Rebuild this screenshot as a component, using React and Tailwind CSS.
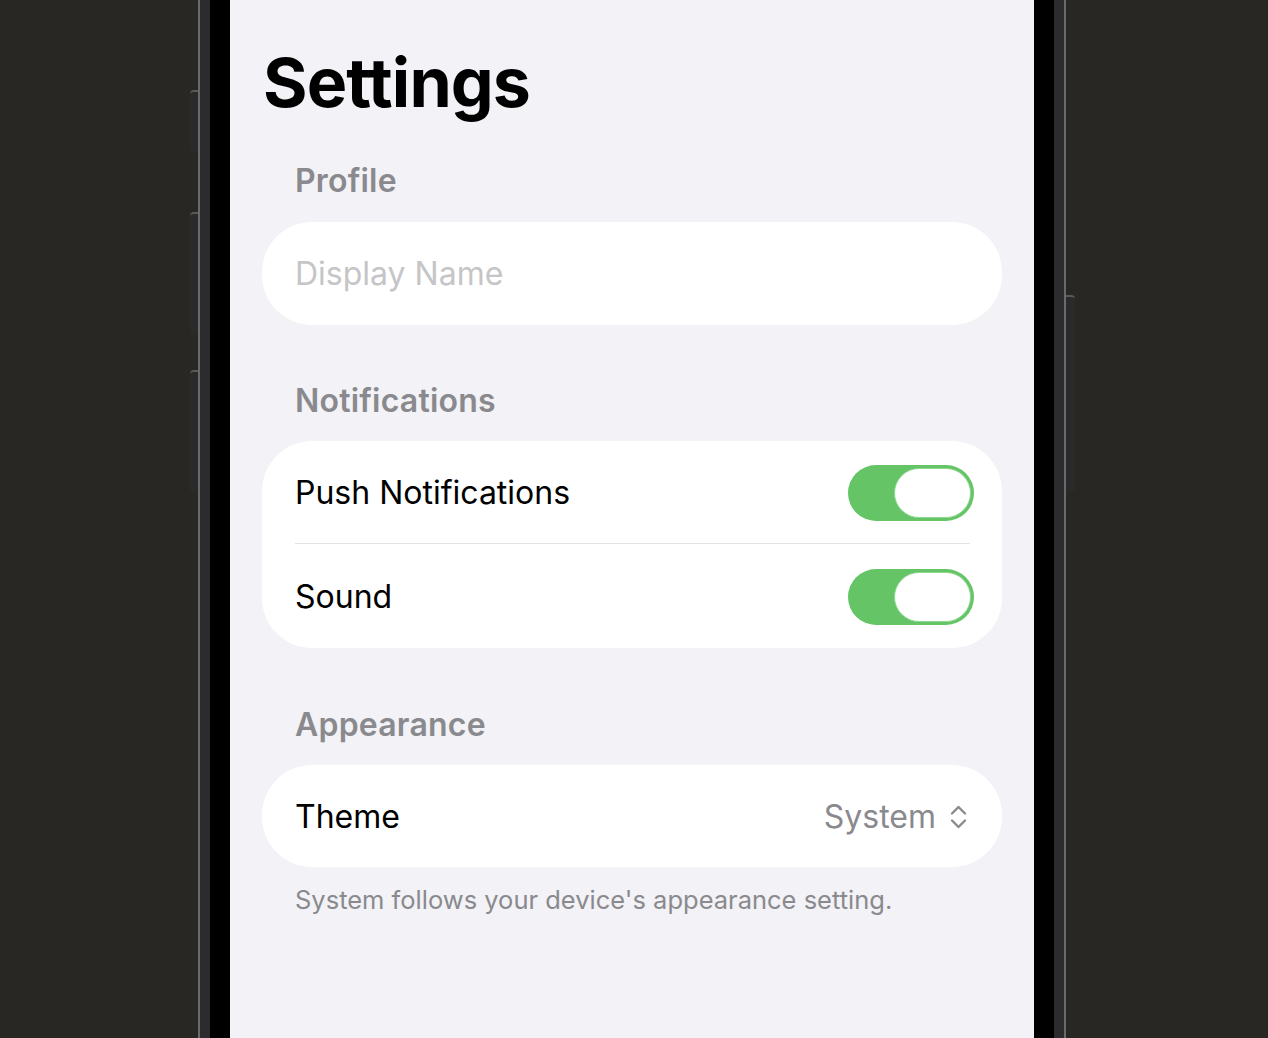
import { useState } from 'react';

const font = { fontFamily: 'Inter, "Noto Sans", sans-serif' };

function Toggle({ on, onChange }) {
  return (
    <button
      onClick={onChange}
      className={`flex h-[56px] w-[126px] items-center rounded-full p-[3px] ${on ? 'justify-end bg-[#65c466]' : 'justify-start bg-[#e9e9eb]'}`}
    >
      <span className="block h-[50px] w-[77px] rounded-full border border-[#8fd88f] bg-white" />
    </button>
  );
}

function UpDown() {
  return (
    <svg width="17" height="26" viewBox="0 0 17 26" fill="none" stroke="#8a8a8e" strokeWidth="2.4" strokeLinecap="round" strokeLinejoin="round">
      <path d="M2 9.5 8.5 3l6.5 6.5" />
      <path d="M2 16.5 8.5 23l6.5-6.5" />
    </svg>
  );
}

function SectionHeader({ children }) {
  return <h2 className="px-[33px] text-[32px] font-semibold leading-[36px] tracking-[0.2px] text-[#8a8a8e]">{children}</h2>;
}

export default function App() {
  const [name, setName] = useState('');
  const [push, setPush] = useState(true);
  const [sound, setSound] = useState(true);

  return (
    <div className="flex h-[1038px] overflow-hidden bg-[#282723] pl-[198px]" style={font}>
      <div className="relative flex h-full w-[868px] border-x-2 border-[#6a6a6a] bg-[#2c2c2e] px-[10px]">
        {/* side buttons */}
        <div className="absolute left-[-10px] top-[90px] h-[63px] w-[8px] rounded-l-sm border-t-2 border-[#5a5a5a] bg-[#2a2a2a]" />
        <div className="absolute left-[-10px] top-[212px] h-[123px] w-[8px] rounded-l-sm border-t-2 border-[#5a5a5a] bg-[#2a2a2a]" />
        <div className="absolute left-[-10px] top-[370px] h-[123px] w-[8px] rounded-l-sm border-t-2 border-[#5a5a5a] bg-[#2a2a2a]" />
        <div className="absolute right-[-11px] top-[295px] h-[197px] w-[9px] rounded-r-sm border-t-2 border-[#5a5a5a] bg-[#2a2a2a]" />

        <div className="flex w-full bg-black px-[20px]">
          <div className="w-[804px] bg-[#f2f2f7] px-[32px] pt-[42px]">
            <h1 className="px-[1px] text-[68px] font-bold leading-[80px] tracking-[-0.9px] text-black">Settings</h1>

            <div className="mt-[41px]">
              <SectionHeader>Profile</SectionHeader>
              <div className="mt-[23px] flex h-[103px] items-center rounded-[50px] bg-white px-[33px]">
                <input
                  value={name}
                  onChange={e => setName(e.target.value)}
                  placeholder="Display Name"
                  className="w-full bg-transparent text-[32px] leading-[40px] text-black outline-none placeholder:text-[#c5c5c7]"
                />
              </div>
            </div>

            <div className="mt-[58px]">
              <SectionHeader>Notifications</SectionHeader>
              <div className="mt-[22px] rounded-[50px] bg-white pl-[33px] pr-[28px]">
                <div className="flex h-[102px] items-center justify-between pt-[2px]">
                  <span className="text-[32px] leading-[40px] text-black">Push Notifications</span>
                  <Toggle on={push} onChange={() => setPush(!push)} />
                </div>
                <div className="mr-[4px] h-px bg-[#e2e2e6]" />
                <div className="flex h-[104px] items-center justify-between pt-[2px]">
                  <span className="text-[32px] leading-[40px] text-black">Sound</span>
                  <Toggle on={sound} onChange={() => setSound(!sound)} />
                </div>
              </div>
            </div>

            <div className="mt-[59px]">
              <SectionHeader>Appearance</SectionHeader>
              <div className="mt-[22px] flex h-[102px] items-center justify-between rounded-[50px] bg-white pl-[33px] pr-[35px]">
                <span className="pt-[2px] text-[32px] leading-[40px] text-black">Theme</span>
                <button className="flex items-center gap-[14px] pt-[2px]">
                  <span className="text-[32px] leading-[40px] text-[#8a8a8e]">System</span>
                  <UpDown />
                </button>
              </div>
              <p className="mt-[17px] px-[33px] text-[25.5px] leading-[32px] text-[#8a8a8e]">
                System follows your device's appearance setting.
              </p>
            </div>
          </div>
        </div>
      </div>
    </div>
  );
}
